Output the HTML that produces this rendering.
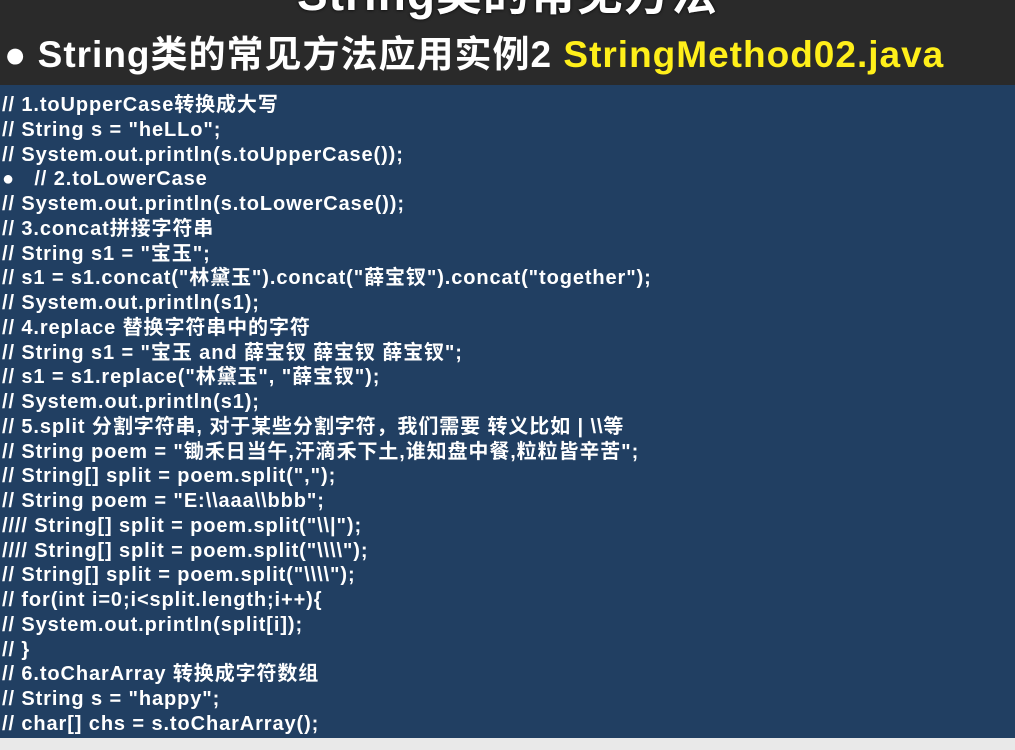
<!DOCTYPE html>
<html><head><meta charset="utf-8"><style>
html,body{margin:0;padding:0;width:1015px;height:750px;overflow:hidden;background:#2a2a2a;position:relative;}
.title{position:absolute;top:-42px;left:0;width:1015px;text-align:center;font:bold 46px "Liberation Sans","Noto Sans CJK SC",sans-serif;color:#fff;text-shadow:0 0 3px #000;letter-spacing:1px;}
.head{position:absolute;top:24px;left:4px;font:bold 37px "Liberation Sans","Noto Sans CJK SC",sans-serif;color:#fff;white-space:nowrap;letter-spacing:1px;}
.head .y{color:#ffef1a;}
.box{position:absolute;top:85px;left:0;width:1015px;height:653px;background:#213f62;overflow:hidden;}
.bot{position:absolute;top:738px;left:0;width:1015px;height:12px;background:#e9e9e9;}
.code{position:absolute;top:8px;left:2px;font:bold 20px/24.75px "Liberation Sans","Noto Sans CJK SC",sans-serif;color:#fff;white-space:pre;letter-spacing:0.9px;}
</style></head><body>
<div class="title">String类的常见方法</div>
<div class="head">●<span style="letter-spacing:0"> </span>String类的常见方法应用实例2 <span class="y">StringMethod02.java</span></div>
<div class="box"><div class="code">// 1.toUpperCase转换成大写
// String s = "heLLo";
// System.out.println(s.toUpperCase());
●   // 2.toLowerCase
// System.out.println(s.toLowerCase());
// 3.concat拼接字符串
// String s1 = "宝玉";
// s1 = s1.concat("林黛玉").concat("薛宝钗").concat("together");
// System.out.println(s1);
// 4.replace 替换字符串中的字符
// String s1 = "宝玉 and 薛宝钗 薛宝钗 薛宝钗";
// s1 = s1.replace("林黛玉", "薛宝钗");
// System.out.println(s1);
// 5.split 分割字符串, 对于某些分割字符，我们需要 转义比如 | \\等
// String poem = "锄禾日当午,汗滴禾下土,谁知盘中餐,粒粒皆辛苦";
// String[] split = poem.split(",");
// String poem = "E:\\aaa\\bbb";
//// String[] split = poem.split("\\|");
//// String[] split = poem.split("\\\\");
// String[] split = poem.split("\\\\");
// for(int i=0;i&lt;split.length;i++){
// System.out.println(split[i]);
// }
// 6.toCharArray 转换成字符数组
// String s = "happy";
// char[] chs = s.toCharArray();
// for (int i = 0; i &lt; chs.length; i++) {</div></div>
<div class="bot"></div>
</body></html>
